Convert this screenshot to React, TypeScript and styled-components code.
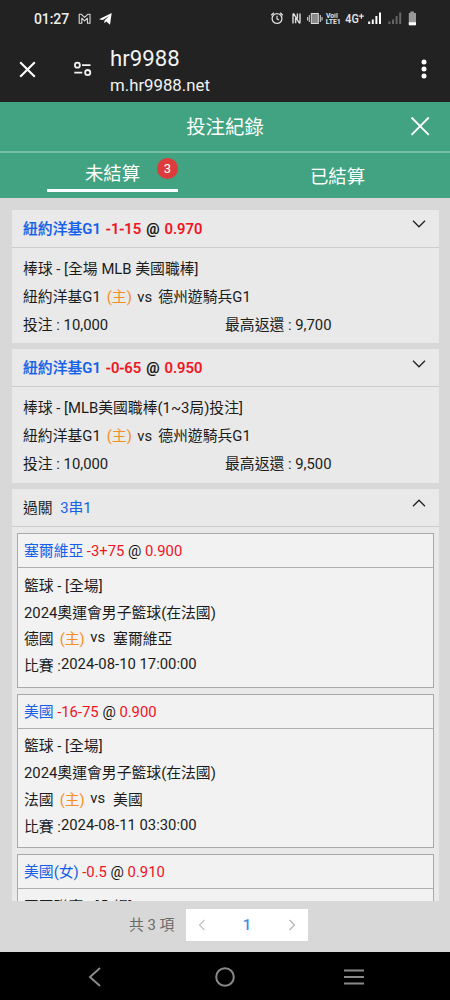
import React from "react";
import styled, { createGlobalStyle } from "styled-components";

const GlobalStyle = createGlobalStyle`
  *, *::before, *::after { box-sizing: border-box; }
  body { margin: 0; background: #d8d8d8; }
`;

const Screen = styled.div`
  width: 450px;
  height: 1000px;
  display: flex;
  flex-direction: column;
  overflow: hidden;
  background: #d8d8d8;
  color: #1c1c1c;
  font-family: Roboto, "Noto Sans CJK TC", sans-serif;
  font-size: 14.83px;
  white-space: pre;
`;

const StatusBar = styled.div`
  height: 36px;
  flex: none;
  display: flex;
  align-items: center;
  padding: 2px 0 0 34px;
  background: #222;
  color: #eee;
`;

const Clock = styled.span`
  width: 44px;
  font-size: 14px;
  font-weight: 500;
  letter-spacing: -0.1px;
`;

const StatusIcons = styled.svg`
  display: block;
  margin-top: -2px;
`;

const BrowserBar = styled.header`
  height: 66px;
  flex: none;
  display: flex;
  align-items: center;
  background: #222;
  color: #f2f2f2;
`;

const CloseIcon = styled.svg`
  flex: none;
  margin-left: 19px;
`;

const SiteIcon = styled.svg`
  flex: none;
  margin-left: 37px;
`;

const Address = styled.div`
  flex: 1;
  margin-left: 18px;
  padding-top: 5px;
  display: flex;
  flex-direction: column;
`;

const SiteName = styled.span`
  font-size: 22.2px;
  line-height: 28px;
`;

const SiteUrl = styled.span`
  font-size: 16.8px;
  line-height: 27px;
`;

const MoreIcon = styled.svg`
  flex: none;
  margin-right: 20px;
`;

const TitleBar = styled.div`
  height: 51px;
  flex: none;
  display: grid;
  grid-template-columns: 60px 1fr 60px;
  align-items: center;
  justify-items: center;
  background: #41a381;
  border-bottom: 2px solid #7abda5;
  color: #fff;
`;

const Title = styled.h1`
  grid-column: 2;
  margin: 0;
  padding-top: 2px;
  font-size: 19.4px;
  font-weight: 400;
  line-height: 30px;
`;

const TitleClose = styled.svg`
  margin-bottom: 1px;
`;

const Tabs = styled.nav`
  height: 45px;
  flex: none;
  display: grid;
  grid-template-columns: 1fr 1fr;
  justify-items: center;
  background: #41a381;
  color: #fff;
`;

const Tab = styled.div<{ $active?: boolean }>`
  position: relative;
  width: 131px;
  height: 39px;
  padding-top: ${(p) => (p.$active ? 7 : 10)}px;
  border-bottom: ${(p) => (p.$active ? "3px solid #fff" : "none")};
  font-size: 18.4px;
  line-height: 28px;
  text-align: center;
`;

const Badge = styled.span`
  position: absolute;
  top: 5px;
  right: 0;
  width: 21px;
  height: 21px;
  border-radius: 50%;
  background: #dc3c3c;
  font-size: 13px;
  line-height: 21px;
  text-align: center;
`;

const List = styled.main`
  height: 703px;
  flex: none;
  padding: 11.5px 11px 0 12px;
  display: flex;
  flex-direction: column;
  gap: 6px;
  overflow: hidden;
`;

const Card = styled.section`
  flex: none;
  background: #e9e9e9;
`;

const CardHeader = styled.div<{ $bold?: boolean }>`
  height: 38px;
  display: flex;
  align-items: center;
  padding: 0 13px 0 11px;
  border-bottom: 1px solid #cdcdcd;
  font-weight: ${(p) => (p.$bold ? 500 : 400)};
  -webkit-text-stroke: ${(p) => (p.$bold ? 0.2 : 0)}px currentColor;
`;

const Heading = styled.div`
  flex: 1;
  padding-top: 1px;
  line-height: 22px;
`;

const Chevron = styled.svg`
  flex: none;
  margin-bottom: 8px;
`;

const CardBody = styled.div`
  height: 95.7px;
  padding: 7px 11px 0;
  line-height: 28px;
`;

const Amounts = styled.div`
  display: grid;
  grid-template-columns: 202px 1fr;
`;

const Legs = styled.div`
  display: flex;
  flex-direction: column;
  gap: 6px;
  padding: 6.4px 5px;
`;

const Leg = styled.article`
  height: 154.4px;
  flex: none;
  border: 1px solid #a9a9a9;
  background: #f2f2f2;
`;

const LegHeader = styled.div`
  height: 34px;
  padding-left: 6px;
  border-bottom: 1px solid #b0b0b0;
  line-height: 35px;
`;

const LegBody = styled.div`
  padding: 4.6px 6px 4px;
  line-height: 26.8px;
`;

const Line = styled.div`
  height: 26.8px;
`;

const Pick = styled.span`
  color: #165fe8;
`;

const Odds = styled.span<{ $gap?: number }>`
  margin-left: ${(p) => p.$gap ?? 0}px;
  color: #f0141e;
`;

const At = styled.span<{ $gap?: number }>`
  margin: 0 ${(p) => p.$gap ?? 0}px;
  color: #111;
`;

const Home = styled.span`
  margin: 0 5.5px 0 6px;
  color: #f5901e;
`;

const Versus = styled.span<{ $gap: number; $lift: number }>`
  display: inline-block;
  margin-right: ${(p) => p.$gap}px;
  line-height: 1;
  transform: translateY(${(p) => -p.$lift}px);
`;

const Kickoff = styled.span`
  display: inline-block;
  line-height: 1;
  transform: translateY(-2px);
`;

const Pager = styled.footer`
  height: 51px;
  flex: none;
  display: flex;
  align-items: center;
  padding: 0 0 3px 129px;
  background: #d8d8d8;
  color: #6a6a6a;
`;

const Total = styled.span`
  width: 57px;
  padding-bottom: 3px;
`;

const PageBox = styled.div`
  width: 122px;
  height: 32px;
  display: flex;
  align-items: center;
  justify-content: space-between;
  padding: 0 12px;
  background: #fff;
`;

const Current = styled.span`
  color: #3f8fe0;
  font-weight: 500;
  font-size: 15px;
`;

const NavBar = styled.div`
  height: 49px;
  flex: none;
  display: flex;
  align-items: center;
  justify-content: space-between;
  padding: 0 85px 0 84px;
  background: #000;
`;

const NavIcon = styled.svg`
  display: block;
  stroke: #898989;
  stroke-width: 2;
  fill: none;
`;

function PhoneStatus() {
  return (
    <StatusBar>
      <Clock>01:27</Clock>
      <StatusIcons width="372" height="24" viewBox="78 6 372 24" fill="none">
        <path d="M79.2 23.2V14.2h2l3.4 3.2 3.4-3.2h2v9h-2.6v-5l-2.8 2.6-2.8-2.6v5z" stroke="#ddd" strokeWidth="1.1" strokeLinejoin="round" />
        <path d="M99 19.2 111.7 13 110 24.7 106.3 21.6 104.3 23.3 104.5 20.6 109 16 102.8 20z" fill="#fff" />
        <circle cx="277" cy="18.5" r="4.9" stroke="#ddd" strokeWidth="1.3" />
        <path d="M277 15.8v3l2 1.2M271.2 15.2l2.6-2.5M282.8 15.2l-2.6-2.5" stroke="#ddd" strokeWidth="1.2" />
        <path d="M293 23.6V14.6q0-1.3 1-.5l4.8 8.2q1.2 1.5 1.2-.3v-8.6M295.6 23.2V18M297.4 18.5v-5" stroke="#ddd" strokeWidth="1.4" />
        <rect x="311.3" y="13.5" width="7" height="10" fill="#8a8a8a" stroke="#ddd" />
        <path d="M309.3 15v7M320.3 15v7M307.6 17v3.4M322 17v3.4" stroke="#ccc" strokeWidth="1.1" />
        <text x="326" y="18" fill="#e4e4e4" fontFamily="Roboto" fontWeight="700" fontSize="6.9">Vo</text>
        <path d="M335 13.4v4.4M337 13v5" stroke="#ddd" strokeWidth="1.1" />
        <text x="325.8" y="24" fill="#e4e4e4" fontFamily="Roboto" fontWeight="700" fontSize="6.9" textLength="15">LTE1</text>
        <text x="345.3" y="22.8" fill="#e6e6e6" fontFamily="Roboto" fontWeight="500" fontSize="12.3" textLength="13.5" lengthAdjust="spacingAndGlyphs">4G</text>
        <path d="M358.9 16.2h5M361.4 13.7v5" stroke="#e6e6e6" strokeWidth="1.3" />
        <path d="M369.2 21.5V24M372.8 19.5V24M376.4 16V24M380 12.5V24" stroke="#fff" strokeWidth="2" />
        <path d="M389.4 21.5V24M393 19.5V24M396.6 16V24M400.2 12.5V24" stroke="#666" strokeWidth="2" />
        <path d="M408.8 24.5V13h1.5v-1.6h3.6V13h2.1v11.5q0 .7-.7.7h-5.8q-.7 0-.7-.7z" fill="#999" />
        <path d="M408.8 22.2h7.2v2.3q0 .7-.7.7h-5.8q-.7 0-.7-.7z" fill="#fff" />
      </StatusIcons>
    </StatusBar>
  );
}

function Browser() {
  return (
    <BrowserBar>
      <CloseIcon width="17" height="17" viewBox="0 0 17 17" stroke="#fff" strokeWidth="2.1">
        <path d="M1.2 1.2 15.8 15.8M15.8 1.2 1.2 15.8" />
      </CloseIcon>
      <SiteIcon width="19" height="16" viewBox="0 0 19 16" fill="none" stroke="#f2f2f2" strokeWidth="1.8">
        <circle cx="4.4" cy="4.2" r="2.5" />
        <path d="M9 4.2h8.5M1.3 11.6h8" />
        <circle cx="14.7" cy="11.6" r="2.6" />
      </SiteIcon>
      <Address>
        <SiteName>hr9988</SiteName>
        <SiteUrl>m.hr9988.net</SiteUrl>
      </Address>
      <MoreIcon width="12" height="20" viewBox="0 0 12 20" fill="#fff">
        <circle cx="6" cy="3.1" r="2.5" />
        <circle cx="6" cy="10" r="2.5" />
        <circle cx="6" cy="16.9" r="2.5" />
      </MoreIcon>
    </BrowserBar>
  );
}

function Toggle({ open }: { open?: boolean }) {
  return (
    <Chevron width="14" height="8" viewBox="0 0 14 8" fill="none" stroke="#222" strokeWidth="1.3">
      <path d={open ? "M1 7.2 7 1.2 13 7.2" : "M1 .8 7 6.8 13 .8"} />
    </Chevron>
  );
}

type Bet = { line: string; odds: string; event: string; win: string };

function BetCard({ line, odds, event, win }: Bet) {
  return (
    <Card>
      <CardHeader $bold>
        <Heading>
          <Pick>紐約洋基G1</Pick>
          <Odds $gap={5}>{line}</Odds>
          <At $gap={5}>@</At>
          <Odds>{odds}</Odds>
        </Heading>
        <Toggle />
      </CardHeader>
      <CardBody>
        <div>{event}</div>
        <div>
          紐約洋基G1<Home>(主)</Home>
          <Versus $gap={6} $lift={0}>vs</Versus>德州遊騎兵G1
        </div>
        <Amounts>
          <span>投注 : 10,000</span>
          <span>最高返還 : {win}</span>
        </Amounts>
      </CardBody>
    </Card>
  );
}

type LegData = {
  pick: string;
  line: string;
  odds: string;
  event: string;
  league?: string;
  home?: string;
  away?: string;
  time?: string;
};

const legs: LegData[] = [
  { pick: "塞爾維亞", line: "-3+75", odds: "0.900", event: "籃球 - [全場]", league: "2024奧運會男子籃球(在法國)", home: "德國", away: "塞爾維亞", time: "2024-08-10 17:00:00" },
  { pick: "美國", line: "-16-75", odds: "0.900", event: "籃球 - [全場]", league: "2024奧運會男子籃球(在法國)", home: "法國", away: "美國", time: "2024-08-11 03:30:00" },
  { pick: "美國(女)", line: "-0.5", odds: "0.910", event: "國國聯賽 - [全場]" },
];

function LegCard({ pick, line, odds, event, league, home, away, time }: LegData) {
  return (
    <Leg>
      <LegHeader>
        <Pick>{pick}</Pick>
        <Odds $gap={3.5}>{line}</Odds>
        <At> @ </At>
        <Odds>{odds}</Odds>
      </LegHeader>
      <LegBody>
        <Line>{event}</Line>
        {league && <Line>{league}</Line>}
        {home && (
          <Line>
            {home}
            <Home>(主)</Home>
            <Versus $gap={8} $lift={2}>vs</Versus>
            {away}
          </Line>
        )}
        {time && (
          <Line>
            比賽 :<Kickoff>{time}</Kickoff>
          </Line>
        )}
      </LegBody>
    </Leg>
  );
}

export default function App() {
  return (
    <Screen>
      <GlobalStyle />
      <PhoneStatus />
      <Browser />
      <TitleBar>
        <Title>投注紀錄</Title>
        <TitleClose width="20" height="20" viewBox="0 0 20 20" stroke="#fff" strokeWidth="1.8">
          <path d="M1.5 1.5 18.8 18.8M18.8 1.5 1.5 18.8" />
        </TitleClose>
      </TitleBar>
      <Tabs>
        <Tab $active>
          未結算<Badge>3</Badge>
        </Tab>
        <Tab>已結算</Tab>
      </Tabs>
      <List>
        <BetCard line="-1-15" odds="0.970" event="棒球 - [全場 MLB 美國職棒]" win="9,700" />
        <BetCard line="-0-65" odds="0.950" event="棒球 - [MLB美國職棒(1~3局)投注]" win="9,500" />
        <Card>
          <CardHeader>
            <Heading>
              過關{"\u2005 "}<Pick>3串1</Pick>
            </Heading>
            <Toggle open />
          </CardHeader>
          <Legs>
            {legs.map((leg) => (
              <LegCard key={leg.pick} {...leg} />
            ))}
          </Legs>
        </Card>
      </List>
      <Pager>
        <Total>共 3 項</Total>
        <PageBox>
          <svg width="8" height="12" viewBox="0 0 8 12" fill="none" stroke="#c4c4c4" strokeWidth="1.3">
            <path d="M6.5 1 1.5 6 6.5 11" />
          </svg>
          <Current>1</Current>
          <svg width="8" height="12" viewBox="0 0 8 12" fill="none" stroke="#b4b4b4" strokeWidth="1.3">
            <path d="M1.5 1 6.5 6 1.5 11" />
          </svg>
        </PageBox>
      </Pager>
      <NavBar>
        <NavIcon width="22" height="20" viewBox="0 0 22 20">
          <path d="M16 1 6 10 16 19" />
        </NavIcon>
        <NavIcon width="20" height="20" viewBox="0 0 20 20">
          <circle cx="10" cy="10" r="8.8" />
        </NavIcon>
        <NavIcon width="22" height="20" viewBox="0 0 22 20">
          <path d="M1 3.5h20M1 10h20M1 16.5h20" />
        </NavIcon>
      </NavBar>
    </Screen>
  );
}
